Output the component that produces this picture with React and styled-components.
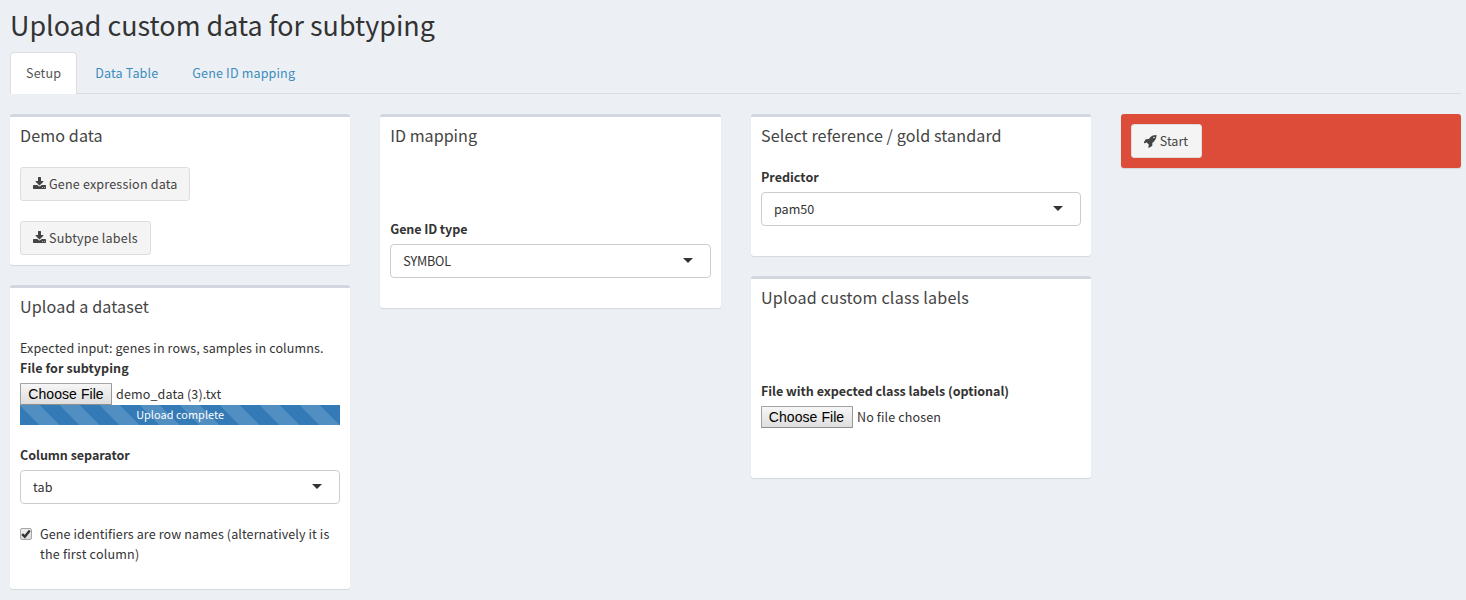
import React from "react";
import styled, { createGlobalStyle } from "styled-components";

const GlobalStyle = createGlobalStyle`
  *, *::before, *::after { box-sizing: border-box; }
  body {
    margin: 0;
    background: #ecf0f5;
    color: #333;
    font-family: "Noto Sans CJK SC", "Noto Sans", sans-serif;
    font-size: 12.55px;
    line-height: 20px;
  }
`;

const Page = styled.main`
  height: 600px;
  padding: 0 5px 0 10px;
  overflow: hidden;
`;

const PageTitle = styled.h2`
  margin: 0;
  padding-top: 8px;
  height: 52px;
  font-size: 26.86px;
  font-weight: 400;
  line-height: 33px;
  letter-spacing: 0.03px;
  white-space: nowrap;
`;

const Tabs = styled.nav`
  display: flex;
  gap: 2px;
  height: 42px;
  border-bottom: 1px solid #d9dde2;
`;

const Tab = styled.a`
  height: 42px;
  padding: 10px 15px 0;
  border: 1px solid ${(p) => (p.$active ? "#ddd" : "transparent")};
  border-bottom: 0;
  border-radius: 4px 4px 0 0;
  background: ${(p) => (p.$active ? "#fff" : "transparent")};
  color: ${(p) => (p.$active ? "#555" : "#3c8dbc")};
  white-space: nowrap;
  letter-spacing: 0.15px;
`;

const Columns = styled.div`
  display: grid;
  grid-template-columns: repeat(4, minmax(0, 1fr));
  gap: 30px;
  align-items: start;
  margin-top: 20px;
`;

const Column = styled.div`
  display: flex;
  flex-direction: column;
  gap: 20px;
  text-indent: ${(p) => p.$indent ?? 0}px;
`;

const Card = styled.section`
  padding-bottom: ${(p) => p.$bottom ?? 10}px;
  border-top: 3px solid #d2d6de;
  border-radius: 3px;
  background: #fff;
  box-shadow: 0 1px 1px rgba(0, 0, 0, 0.1);
`;

const CardTitle = styled.h3`
  height: 40px;
  margin: 0;
  padding: 8px 10px 0;
  color: #444;
  font-size: 16.12px;
  font-weight: 400;
  line-height: 20px;
  letter-spacing: ${(p) => p.$spacing ?? 0.1}px;
  white-space: nowrap;
`;

const CardBody = styled.div`
  display: flex;
  flex-direction: column;
  align-items: stretch;
  padding: ${(p) => p.$top ?? 10}px 10px 0;
`;

const ActionCard = styled.section`
  padding: 10px;
  border-radius: 3px;
  background: #dd4b39;
  box-shadow: 0 1px 1px rgba(0, 0, 0, 0.1);
`;

const Button = styled.button`
  display: flex;
  align-items: center;
  gap: 3px;
  width: ${(p) => p.$width}px;
  height: 34px;
  padding: 0 0 0 12px;
  border: 1px solid #ddd;
  border-radius: 3px;
  background: #f4f4f4;
  color: #444;
  font: inherit;
  letter-spacing: ${(p) => p.$spacing ?? 0.18}px;
  white-space: nowrap;
  & + & { margin-top: 20px; }
`;

const Icon = styled.svg`
  flex: none;
  width: 13px;
  height: 14px;
  fill: currentColor;
`;

const Text = styled.p`
  margin: 0;
  letter-spacing: 0.1px;
  white-space: nowrap;
`;

const Label = styled.label`
  margin-bottom: 5px;
  font-weight: 700;
  letter-spacing: ${(p) => p.$spacing ?? -0.05}px;
  white-space: nowrap;
`;

const Select = styled.div`
  display: flex;
  align-items: center;
  justify-content: space-between;
  height: 34px;
  padding: 0 17px 0 12px;
  border: 1px solid #ccc;
  border-radius: 4px;
  background: #fff;
  letter-spacing: ${(p) => p.$spacing ?? 0}px;
  &::after {
    content: "";
    margin-bottom: 1px;
    border: 5px solid transparent;
    border-top-color: #333;
    border-bottom: 0;
  }
`;

const FileRow = styled.div`
  display: flex;
  align-items: center;
  gap: 4px;
  height: 22px;
  letter-spacing: 0.11px;
  white-space: nowrap;
`;

const FileButton = styled.button`
  width: 92px;
  height: 22px;
  padding: 0;
  border: 1px solid #a0a0a0;
  border-color: #a6a6a6 #999 #8e8e8e #a0a0a0;
  border-radius: 1px;
  background: linear-gradient(#f6f6f6, #dedede);
  color: #000;
  font: 14px/20px "Liberation Sans", Arial, sans-serif;
  letter-spacing: 0.07px;
`;

const Progress = styled.div`
  height: 20px;
  margin-bottom: 20px;
  background: #337ab7 linear-gradient(45deg, rgba(255, 255, 255, 0.15) 25%, transparent 25%, transparent 50%,
    rgba(255, 255, 255, 0.15) 50%, rgba(255, 255, 255, 0.15) 75%, transparent 75%, transparent) 0 0 / 40px 40px;
  color: #fff;
  font-size: 10.9px;
  line-height: 18px;
  letter-spacing: 0.05px;
  text-align: center;
`;

const CheckRow = styled.label`
  display: flex;
  gap: 8px;
  margin-top: 20px;
  margin-right: -5px;
  letter-spacing: 0.1px;
`;

const CheckBox = styled.span`
  display: flex;
  flex: none;
  width: 12px;
  height: 12px;
  margin-top: 4px;
  border: 1px solid #a5a5a5;
  border-radius: 2px;
  background: linear-gradient(#f0f0f0, #dcdcdc);
`;

const DownloadIcon = () => (
  <Icon viewBox="64 0 1664 1792">
    <path d="M1344 1344q0-26-19-45t-45-19-45 19-19 45 19 45 45 19 45-19 19-45zm256 0q0-26-19-45t-45-19-45 19-19 45 19 45 45 19 45-19 19-45zm128-224v320q0 40-28 68t-68 28h-1472q-40 0-68-28t-28-68v-320q0-40 28-68t68-28h465l135 136q58 56 136 56t136-56l136-136h464q40 0 68 28t28 68zm-325-569q17 41-14 70l-448 448q-18 19-45 19t-45-19l-448-448q-31-29-14-70 17-39 59-39h256v-448q0-26 19-45t45-19h256q26 0 45 19t19 45v448h256q42 0 59 39z" />
  </Icon>
);

const RocketIcon = () => (
  <Icon viewBox="64 0 1664 1792">
    <path d="M1440 448q0-40-28-68t-68-28-68 28-28 68 28 68 68 28 68-28 28-68zm224-288q0 249-75.5 430.5t-253.5 360.5q-81 80-195 176l-20 379q-2 16-16 26l-384 224q-7 4-16 4-12 0-23-9l-64-64q-13-14-8-32l85-276-281-281-276 85q-3 1-9 1-14 0-23-9l-64-64q-17-19-5-39l224-384q10-14 26-16l379-20q96-114 176-195 188-187 358-258t431-71q14 0 24 9.5t10 22.5z" />
  </Icon>
);

export default function App() {
  return (
    <Page>
      <GlobalStyle />
      <PageTitle>Upload custom data for subtyping</PageTitle>
      <Tabs>
        <Tab $active>Setup</Tab>
        <Tab>Data Table</Tab>
        <Tab>Gene ID mapping</Tab>
      </Tabs>
      <Columns>
        <Column>
          <Card>
            <CardTitle>Demo data</CardTitle>
            <CardBody>
              <Button $width={170}><DownloadIcon />Gene expression data</Button>
              <Button $width={131}><DownloadIcon />Subtype labels</Button>
            </CardBody>
          </Card>
          <Card $bottom={25}>
            <CardTitle $spacing={0.13}>Upload a dataset</CardTitle>
            <CardBody>
              <Text>Expected input: genes in rows, samples in columns.</Text>
              <Label $spacing={0.05}>File for subtyping</Label>
              <FileRow><FileButton>Choose File</FileButton>demo_data (3).txt</FileRow>
              <Progress>Upload complete</Progress>
              <Label>Column separator</Label>
              <Select $spacing={0.15}>tab</Select>
              <CheckRow>
                <CheckBox>
                  <svg width="10" height="10" viewBox="0 0 10 10" fill="none" stroke="#333" strokeWidth="2.4">
                    <path d="M1.2 5.2 3.8 7.7 8.8 1.4" />
                  </svg>
                </CheckBox>
                <span>Gene identifiers are row names (alternatively it is<br />
                  <LastLine>the first column)</LastLine></span>
              </CheckRow>
            </CardBody>
          </Card>
        </Column>
        <Column>
          <Card $bottom={30}>
            <CardTitle $spacing={0}>ID mapping</CardTitle>
            <CardBody $top={62}>
              <Label $spacing={-0.1}>Gene ID type</Label>
              <Select $spacing={-0.15}>SYMBOL</Select>
            </CardBody>
          </Card>
        </Column>
        <Column $indent={0.5}>
          <Card $bottom={30}>
            <CardTitle>Select reference / gold standard</CardTitle>
            <CardBody>
              <Label $spacing={0}>Predictor</Label>
              <Select>pam50</Select>
            </CardBody>
          </Card>
          <Card $bottom={50}>
            <CardTitle $spacing={0.2}>Upload custom class labels</CardTitle>
            <CardBody $top={62}>
              <Label $spacing={-0.04}>File with expected class labels (optional)</Label>
              <FileRow><FileButton>Choose File</FileButton>No file chosen</FileRow>
            </CardBody>
          </Card>
        </Column>
        <ActionCard>
          <Button $width={71} $spacing={0}><RocketIcon />Start</Button>
        </ActionCard>
      </Columns>
    </Page>
  );
}

const LastLine = styled.span`
  letter-spacing: 0.2px;
`;
